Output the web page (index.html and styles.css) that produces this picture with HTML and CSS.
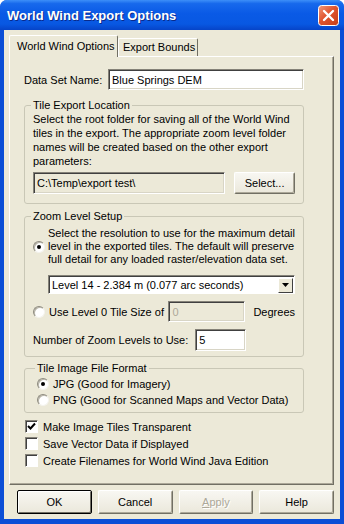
FILE: index.html
```html
<!DOCTYPE html>
<html lang="en">
<head>
    <meta charset="UTF-8">
    <title>World Wind Export Options</title>
    <link rel="stylesheet" href="styles.css">
</head>
<body>
<div class="window">
    <!-- title bar -->
    <div class="titlebar">
        <span class="title">World Wind Export Options</span>
        <span class="close">
            <svg width="21" height="21" viewBox="0 0 21 21">
                <defs>
                    <linearGradient id="cg" x1="0" y1="0" x2="1" y2="1">
                        <stop offset="0" stop-color="#f29a7c"/>
                        <stop offset="0.45" stop-color="#e0552f"/>
                        <stop offset="1" stop-color="#c53d17"/>
                    </linearGradient>
                </defs>
                <rect x="0.5" y="0.5" width="20" height="20" rx="3" fill="url(#cg)" stroke="#fff"/>
                <path d="M6 6 L15 15 M15 6 L6 15" stroke="#fff" stroke-width="2.4" stroke-linecap="round"/>
            </svg>
        </span>
    </div>

    <div class="client">
        <div class="tabs">
            <div class="tab active">World Wind Options</div>
            <div class="tab">Export Bounds</div>
        </div>

        <div class="panel">
            <div class="name-row">
                <label>Data Set Name:</label>
                <input class="field name-field" type="text" value="Blue Springs DEM">
            </div>

            <!-- Tile Export Location -->
            <fieldset class="group loc">
                <legend>Tile Export Location</legend>
                <p class="desc">Select the root folder for saving all of the World Wind tiles in the export. The appropriate zoom level folder names will be created based on the other export parameters:</p>
                <div class="path-row">
                    <input class="field path-field" type="text" value="C:\Temp\export test\" disabled>
                    <span class="btn select-btn">Select...</span>
                </div>
            </fieldset>

            <!-- Zoom Level Setup -->
            <fieldset class="group zoom">
                <legend>Zoom Level Setup</legend>
                <div class="radio-row top-radio">
                    <span class="radio on"></span>
                    <span class="radio-text">Select the resolution to use for the maximum detail level in the exported tiles. The default will preserve full detail for any loaded raster/elevation data set.</span>
                </div>
                <div class="dropdown">
                    <span class="dropdown-text">Level 14 - 2.384 m (0.077 arc seconds)</span>
                    <span class="dropdown-arrow">
                        <svg width="7" height="4" viewBox="0 0 7 4"><path d="M0 0 H7 L3.5 4 Z" fill="#000"/></svg>
                    </span>
                </div>
                <div class="size-row">
                    <span class="radio"></span>
                    <span class="size-label">Use Level 0 Tile Size of</span>
                    <input class="field size-field" type="text" value="0" disabled>
                    <span class="degrees">Degrees</span>
                </div>
                <div class="levels-row">
                    <span>Number of Zoom Levels to Use:</span>
                    <input class="field levels-field" type="text" value="5">
                </div>
            </fieldset>

            <!-- Tile Image File Format -->
            <fieldset class="group format">
                <legend>Tile Image File Format</legend>
                <div class="fmt-row"><span class="radio on"></span><span>JPG (Good for Imagery)</span></div>
                <div class="fmt-row"><span class="radio"></span><span>PNG (Good for Scanned Maps and Vector Data)</span></div>
            </fieldset>

            <div class="checks">
                <div class="check-row">
                    <span class="check">
                        <svg width="9" height="9" viewBox="0 0 9 9"><path d="M1 4 L3.5 6.5 L8 1.5" stroke="#000" stroke-width="2" fill="none"/></svg>
                    </span>
                    <span>Make Image Tiles Transparent</span>
                </div>
                <div class="check-row"><span class="check"></span><span>Save Vector Data if Displayed</span></div>
                <div class="check-row"><span class="check"></span><span>Create Filenames for World Wind Java Edition</span></div>
            </div>
        </div>

        <div class="buttons">
            <span class="btn default">OK</span>
            <span class="btn">Cancel</span>
            <span class="btn disabled"><u>A</u>pply</span>
            <span class="btn">Help</span>
        </div>
    </div>
</div>
</body>
</html>
```

FILE: styles.css
```css
body {
    margin: 0;
    font-family: "Liberation Sans", Arial, sans-serif;
    font-size: 11px;
    color: #000;
}

.window {
    width: 344px;
    height: 524px;
    display: flex;
    flex-direction: column;
    background: #0b4ed6;
    border-radius: 7px 7px 0 0;
    overflow: hidden;
}

/* title bar */
.titlebar {
    height: 30px;
    flex: none;
    display: flex;
    align-items: center;
    justify-content: space-between;
    padding: 0 5px 0 7px;
    background: linear-gradient(#3d8ff8 0%, #1769ec 12%, #0a5ae6 45%, #0858e2 80%, #0644c8 100%);
}

.title {
    color: #fff;
    font-weight: bold;
    font-size: 13px;
    text-shadow: 1px 1px 0 #0a2a8a;
}

.close {
    display: flex;
    margin-top: 1px;
}

/* main area */
.client {
    flex: 1;
    margin: 0 4px 5px;
    padding: 5px 6px 5px 5px;
    background: #ece9d8;
    display: flex;
    flex-direction: column;
}

.tabs {
    height: 21px;
    flex: none;
    display: flex;
    align-items: flex-end;
    position: relative;
    z-index: 1;
}

.tab {
    box-sizing: border-box;
    flex: none;
    white-space: nowrap;
    background: #ece9d8;
    border: 1px solid #fff;
    border-right-color: #716f64;
    border-bottom: none;
    border-radius: 2px 2px 0 0;
    height: 18px;
    line-height: 17px;
    padding: 0 0 0 4px;
    width: 80px;
}

.tab.active {
    height: 22px;
    width: 109px;
    line-height: 21px;
    padding-left: 7px;
    margin-bottom: -1px;
}

.panel {
    flex: 1;
    border: 1px solid #fff;
    border-right-color: #716f64;
    border-bottom-color: #716f64;
    box-shadow: inset -1px -1px 0 #aca899;
    padding: 12px 29px 0 14px;
}

.field {
    box-sizing: border-box;
    margin: 0;
    font-family: inherit;
    font-size: 11px;
    color: #000;
    background: #fff;
    border: 1px solid;
    border-color: #858278 #fff #fff #858278;
    box-shadow: inset 1px 1px 0 #404040, inset -1px -1px 0 #d8d5c6;
    padding: 0 3px;
    outline: none;
}

.field:disabled {
    background: #ece9d8;
    color: #000;
}

.name-row {
    height: 21px;
    display: flex;
    align-items: center;
    justify-content: space-between;
}

.name-field {
    width: 196px;
    height: 21px;
}

/* group boxes */
.group {
    margin: 8px 0 0;
    border: 1px solid #c9c7b6;
    border-radius: 3px;
    padding: 0 8px 9px;
    min-width: 0;
}

.group legend {
    padding: 0 2px;
    margin-left: -2px;
    line-height: 14px;
}

.desc {
    margin: 0;
    line-height: 14px;
}

.path-row {
    margin-top: 4px;
    display: flex;
    gap: 9px;
}

.path-field {
    width: 196px;
    height: 22px;
}

.btn {
    box-sizing: border-box;
    display: flex;
    align-items: center;
    justify-content: center;
    background: linear-gradient(#f8f7f2, #ebe8db);
    border: 1px solid;
    border-color: #fff #716f64 #716f64 #fff;
    box-shadow: inset -1px -1px 0 #aca899;
    border-radius: 2px;
}

.select-btn {
    width: 62px;
    height: 22px;
}

.zoom {
    margin-top: 5px;
    padding-bottom: 5px;
}

.radio {
    flex: none;
    box-sizing: border-box;
    width: 12px;
    height: 12px;
    border-radius: 50%;
    background: #fff;
    border: 1px solid;
    border-color: #8d8a7e #f4f3ee #f4f3ee #8d8a7e;
    box-shadow: inset 1px 1px 0 #b8b5a8;
    display: inline-flex;
    align-items: center;
    justify-content: center;
}

.radio.on::after {
    content: "";
    width: 4px;
    height: 4px;
    border-radius: 50%;
    background: #000;
}

.radio-row {
    display: flex;
    align-items: center;
    gap: 3px;
}

.top-radio {
    padding-top: 4px;
}

.radio-text {
    line-height: 13px;
}

.dropdown {
    box-sizing: border-box;
    margin: 9px 0 0 15px;
    width: 247px;
    height: 19px;
    background: #fff;
    border: 1px solid;
    border-color: #858278 #fff #fff #858278;
    box-shadow: inset 1px 1px 0 #404040;
    display: flex;
    align-items: center;
    justify-content: space-between;
    padding: 0 1px 0 3px;
}

.dropdown-arrow {
    box-sizing: border-box;
    width: 15px;
    height: 15px;
    margin-top: 1px;
    display: flex;
    align-items: center;
    justify-content: center;
    background: #ece9d8;
    border: 1px solid;
    border-color: #fff #404040 #404040 #fff;
}

.size-row {
    margin-top: 7px;
    height: 21px;
    display: flex;
    align-items: center;
}

.size-label {
    margin-left: 4px;
    width: 122px;
}

.size-field {
    width: 77px;
    height: 21px;
}

.field.size-field:disabled {
    color: #aca899;
}

.degrees {
    margin-left: 8px;
}

.levels-row {
    margin-top: 7px;
    height: 22px;
    display: flex;
    align-items: center;
    gap: 7px;
}

.levels-field {
    width: 51px;
    height: 22px;
}

.format {
    margin-top: 4px;
    padding: 1px 8px 4px 12px;
}

.fmt-row {
    height: 16px;
    display: flex;
    align-items: center;
    gap: 4px;
}

/* check boxes */
.checks {
    margin-top: 5px;
    padding-left: 1px;
}

.check-row {
    height: 17px;
    display: flex;
    align-items: center;
    gap: 5px;
}

.check {
    box-sizing: border-box;
    width: 13px;
    height: 13px;
    background: #fff;
    border: 1px solid;
    border-color: #858278 #fff #fff #858278;
    box-shadow: inset 1px 1px 0 #404040;
    display: flex;
    align-items: center;
    justify-content: center;
}

/* bottom buttons */
.buttons {
    margin-top: 5px;
    height: 24px;
    flex: none;
    display: flex;
    gap: 6px;
    padding-left: 8px;
}

.buttons .btn {
    width: 75px;
    height: 24px;
}

.btn.default {
    border: 1px solid #000;
    box-shadow: inset 1px 1px 0 #fff, inset -1px -1px 0 #716f64;
}

.btn.disabled {
    color: #aca899;
    text-shadow: 1px 1px 0 #fff;
}
```
